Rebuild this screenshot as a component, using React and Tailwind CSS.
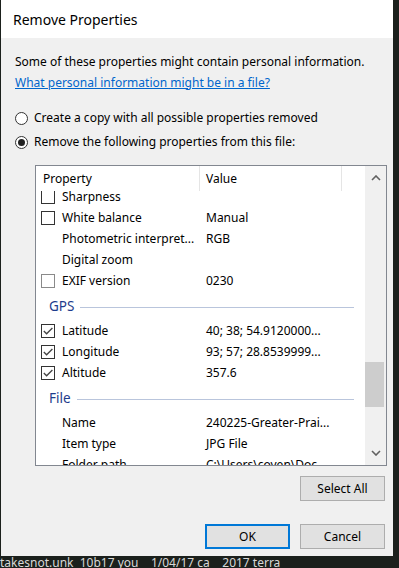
import React from "react";

const font = { fontFamily: '"Noto Sans", "Open Sans", sans-serif' };

function Check({ checked, light }) {
  return (
    <div
      className={`w-[14px] h-[14px] shrink-0 bg-white border flex items-center justify-center ${
        light ? "border-[#8a8a8a]" : "border-[#333333]"
      }`}
    >
      {checked && (
        <svg width="12" height="12" viewBox="0 0 12 12">
          <path d="M1.8 6 L4.6 8.8 L10.4 3" fill="none" stroke="#444" strokeWidth="1.3" />
        </svg>
      )}
    </div>
  );
}

function Row({ check, checked, light, name, value }) {
  return (
    <div className="h-[21px] flex items-center shrink-0">
      <div className="w-[164px] flex items-center pl-[5px] shrink-0">
        <div className="w-[14px] shrink-0">{check && <Check checked={checked} light={light} />}</div>
        <span className="ml-[7px] whitespace-nowrap">{name}</span>
      </div>
      <span className="pl-[6px] whitespace-nowrap">{value}</span>
    </div>
  );
}

function Group({ label }) {
  return (
    <div className="h-[29px] flex items-center pt-[3px] pl-[13px] pr-[11px] shrink-0">
      <span className="text-[13.5px] text-[#1e3c8c] leading-none">{label}</span>
      <div className="flex-1 h-px bg-[#b9c5dc] ml-[6px]" />
    </div>
  );
}

function Chevron({ up }) {
  return (
    <svg width="10" height="6" viewBox="0 0 10 6">
      <path
        d={up ? "M1 5 L5 1 L9 5" : "M1 1 L5 5 L9 1"}
        fill="none"
        stroke="#606060"
        strokeWidth="1.6"
      />
    </svg>
  );
}

function Button({ children, primary }) {
  return (
    <div
      className={`w-[85px] h-[25px] flex items-center justify-center bg-[#e1e1e1] ${
        primary ? "border-2 border-[#0078d7]" : "border border-[#adadad]"
      }`}
    >
      {children}
    </div>
  );
}

export default function App() {
  return (
    <div className="w-[399px] h-[568px] bg-[#1b201c] overflow-hidden flex flex-col text-[12px] text-black" style={font}>
      <div className="ml-[1px] w-[392px] h-[556px] flex flex-col shrink-0">
        <div className="h-[38px] bg-white flex items-center pl-[12px] text-[14px] shrink-0">Remove Properties</div>
        <div className="flex-1 bg-[#f0f0f0] pl-[14px] pr-[7px] pt-[13px] flex flex-col">
          <div className="h-[21px] flex items-center">Some of these properties might contain personal information.</div>
          <div className="h-[21px] flex items-center">
            <span className="text-[#0066cc] underline">What personal information might be in a file?</span>
          </div>
          <div className="mt-[13px] h-[24px] flex items-center">
            <div className="w-[13px] h-[13px] rounded-full border border-[#333] bg-white" />
            <span className="ml-[6px]">Create a copy with all possible properties removed</span>
          </div>
          <div className="h-[24px] flex items-center">
            <div className="w-[13px] h-[13px] rounded-full border border-[#333] bg-white flex items-center justify-center">
              <div className="w-[7px] h-[7px] rounded-full bg-[#222]" />
            </div>
            <span className="ml-[6px]">Remove the following properties from this file:</span>
          </div>
          <div className="mt-[11px] ml-[20px] w-[352px] h-[301px] border border-[#828790] bg-white flex">
            <div className="flex-1 flex flex-col overflow-hidden">
              <div className="h-[25px] flex items-center shrink-0 bg-white">
                <div className="w-[164px] h-full flex items-center pl-[7px] border-r border-[#e5e5e5]">Property</div>
                <div className="w-[142px] h-full flex items-center pl-[6px] border-r border-[#e5e5e5]">Value</div>
              </div>
              <div className="flex-1 overflow-hidden">
                <div className="-mt-[5px] flex flex-col">
                  <Row check name="Sharpness" value="" />
                  <Row check name="White balance" value="Manual" />
                  <Row name="Photometric interpret..." value="RGB" />
                  <Row name="Digital zoom" value="" />
                  <Row check light name="EXIF version" value="0230" />
                  <Group label="GPS" />
                  <Row check checked name="Latitude" value="40; 38; 54.9120000..." />
                  <Row check checked name="Longitude" value="93; 57; 28.8539999..." />
                  <Row check checked name="Altitude" value="357.6" />
                  <Group label="File" />
                  <Row name="Name" value="240225-Greater-Prai..." />
                  <Row name="Item type" value="JPG File" />
                  <Row name="Folder path" value="C:\Users\coyen\Doc..." />
                </div>
              </div>
            </div>
            <div className="w-[21px] bg-[#f0f0f0] flex flex-col">
              <div className="h-[24px] flex items-center justify-center shrink-0"><Chevron up /></div>
              <div className="h-[172px] shrink-0" />
              <div className="h-[45px] w-[19px] bg-[#cdcdcd] shrink-0" />
              <div className="flex-1" />
              <div className="h-[24px] flex items-center justify-center shrink-0"><Chevron /></div>
            </div>
          </div>
          <div className="mt-[10px] flex justify-end pr-[1px]">
            <Button>Select All</Button>
          </div>
          <div className="mt-[23px] flex justify-end gap-[10px] pr-[1px]">
            <Button primary>OK</Button>
            <Button>Cancel</Button>
          </div>
        </div>
      </div>
      <div className="h-[12px] text-[12px] leading-[14px] text-[#d8d8d8] whitespace-pre overflow-hidden">
        {"takesnot.unk  10b17 you    1/04/17 ca    2017 terra"}
      </div>
    </div>
  );
}
